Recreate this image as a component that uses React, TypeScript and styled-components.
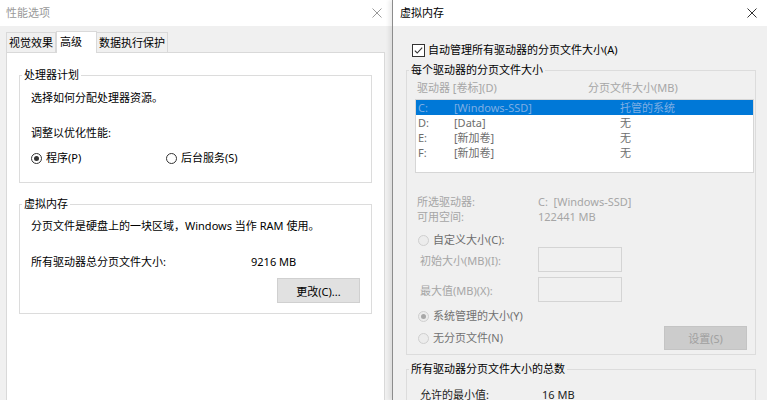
import React from "react";
import styled, { createGlobalStyle } from "styled-components";

const GlobalStyle = createGlobalStyle`
  html, body {
    margin: 0;
    padding: 0;
  }
  body {
    font-family: "Noto Sans", "Noto Sans CJK SC", sans-serif;
    font-size: 11px;
    color: #000;
    background: #f0f0f0;
  }
`;

const Screen = styled.div`
  display: flex;
  width: 767px;
  height: 400px;
  overflow: hidden;
  background: #f0f0f0;
`;

const Window = styled.div<{ $width?: number; $active?: boolean }>`
  display: flex;
  flex-direction: column;
  flex: ${(p) => (p.$width ? `0 0 ${p.$width}px` : "1 1 auto")};
  min-width: 0;
  background: #f0f0f0;
  border-left: ${(p) => (p.$active ? "1px solid #8c8c8c" : "none")};
  box-shadow: ${(p) => (p.$active ? "-3px 0 4px rgba(0,0,0,0.08)" : "none")};
`;

const TitleBar = styled.div<{ $active?: boolean }>`
  display: flex;
  align-items: center;
  justify-content: space-between;
  flex: 0 0 26px;
  padding: 0 10px 0 ${(p) => (p.$active ? 7 : 6)}px;
  background: #fff;
  color: ${(p) => (p.$active ? "#000" : "#999")};
  line-height: 14px;
`;

const CloseIcon = ({ color }: { color: string }) => (
  <svg width="10" height="10" viewBox="0 0 10 10">
    <path d="M0.5 0.5 L9.5 9.5 M9.5 0.5 L0.5 9.5" stroke={color} strokeWidth="1" />
  </svg>
);

/* ---------- left dialog ---------- */

const LeftBody = styled.div`
  display: flex;
  flex-direction: column;
  flex: 1;
  padding: 6px 7px 0 6px;
`;

const TabRow = styled.div`
  display: flex;
  align-items: flex-end;
  height: 20px;
`;

const Tab = styled.div<{ $selected?: boolean }>`
  position: relative;
  z-index: ${(p) => (p.$selected ? 1 : 0)};
  height: ${(p) => (p.$selected ? 21 : 19)}px;
  line-height: ${(p) => (p.$selected ? 19 : 19)}px;
  margin-bottom: ${(p) => (p.$selected ? -1 : 0)}px;
  padding: ${(p) => (p.$selected ? "0 14px 0 3px" : "0 2px")};
  border: 1px solid #d9d9d9;
  border-bottom: none;
  border-left: ${(p) => (p.$selected ? "1px solid #d9d9d9" : "none")};
  background: ${(p) => (p.$selected ? "#fff" : "#f0f0f0")};
  &:first-child {
    border-left: 1px solid #d9d9d9;
  }
`;

const TabPanel = styled.div`
  flex: 1;
  background: #fff;
  border: 1px solid #d9d9d9;
  border-bottom: none;
  padding: 0 12px;
`;

const Group = styled.fieldset<{ $mt: number; $pb: number; $pr?: number }>`
  margin: ${(p) => p.$mt}px 0 0;
  padding: 0 ${(p) => p.$pr ?? 0}px ${(p) => p.$pb}px 2px;
  border: 1px solid #dcdcdc;
  min-width: 0;
`;

const Legend = styled.legend`
  padding: 0 2px;
  line-height: 14px;
  color: #000;
`;

const GroupContent = styled.div<{ $pl: number }>`
  display: flex;
  flex-direction: column;
  padding-left: ${(p) => p.$pl}px;
`;

const Line = styled.div<{ $mt?: number; $color?: string; $lh?: number; $pl?: number }>`
  margin-top: ${(p) => p.$mt ?? 0}px;
  padding-left: ${(p) => p.$pl ?? 0}px;
  line-height: ${(p) => p.$lh ?? 14}px;
  color: ${(p) => p.$color ?? "#000"};
  white-space: nowrap;
`;

const ValueRow = styled.div<{ $mt?: number; $col: number; $color?: string; $lh?: number; $pl?: number }>`
  display: grid;
  grid-template-columns: ${(p) => p.$col}px auto;
  margin-top: ${(p) => p.$mt ?? 0}px;
  padding-left: ${(p) => p.$pl ?? 0}px;
  line-height: ${(p) => p.$lh ?? 14}px;
  color: ${(p) => p.$color ?? "#000"};
  white-space: nowrap;
`;

const RadioRow = styled.div<{ $mt?: number }>`
  display: grid;
  grid-template-columns: 135px auto;
  margin-top: ${(p) => p.$mt ?? 0}px;
`;

const RadioLabel = styled.label<{ $color?: string; $gap?: number; $pl?: number; $mt?: number }>`
  display: flex;
  align-items: center;
  gap: ${(p) => p.$gap ?? 4}px;
  margin-top: ${(p) => p.$mt ?? 0}px;
  padding-left: ${(p) => p.$pl ?? 0}px;
  line-height: 14px;
  color: ${(p) => p.$color ?? "#000"};
  white-space: nowrap;
`;

const RadioCircle = styled.span<{ $checked?: boolean; $disabled?: boolean }>`
  display: inline-flex;
  align-items: center;
  justify-content: center;
  box-sizing: border-box;
  width: 11px;
  height: 11px;
  border-radius: 50%;
  border: 1px solid ${(p) => (p.$disabled ? "#cfcfcf" : "#333")};
  background: ${(p) => (p.$disabled ? "#ececec" : "#fff")};
  &::after {
    content: "";
    display: ${(p) => (p.$checked ? "block" : "none")};
    width: 5px;
    height: 5px;
    border-radius: 50%;
    background: ${(p) => (p.$disabled ? "#a8a8a8" : "#333")};
  }
`;

const ButtonRow = styled.div<{ $mt?: number; $pr?: number }>`
  display: flex;
  justify-content: flex-end;
  margin-top: ${(p) => p.$mt ?? 0}px;
  padding-right: ${(p) => p.$pr ?? 0}px;
`;

const Button = styled.button<{ $disabled?: boolean; $h?: number }>`
  box-sizing: border-box;
  width: 83px;
  height: ${(p) => p.$h ?? 25}px;
  font: inherit;
  font-size: 11px;
  color: ${(p) => (p.$disabled ? "#a0a0a0" : "#000")};
  background: ${(p) => (p.$disabled ? "#cccccc" : "#e1e1e1")};
  border: 1px solid ${(p) => (p.$disabled ? "#c4c4c4" : "#d0d0d0")};
  padding: 0;
`;

/* ---------- right dialog ---------- */

const RightBody = styled.div`
  display: flex;
  flex-direction: column;
  flex: 1;
  padding: 17px 11px 0 13px;
`;

const CheckRow = styled.label`
  display: flex;
  align-items: center;
  gap: 3px;
  padding-left: 6px;
  line-height: 14px;
  white-space: nowrap;
`;

const ListBox = styled.div`
  margin-top: 4px;
  height: 74px;
  box-sizing: border-box;
  border: 1px solid #d6d6d6;
  background: #fff;
  padding-top: 0;
`;

const ListRow = styled.div<{ $selected?: boolean }>`
  display: grid;
  grid-template-columns: 36px 166px auto;
  height: 15px;
  line-height: 15px;
  padding-left: 2px;
  background: ${(p) => (p.$selected ? "#0078d7" : "transparent")};
  color: ${(p) => (p.$selected ? "#7eaee4" : "#6d6d6d")};
  white-space: nowrap;
`;

const InputRow = styled.div<{ $mt?: number }>`
  display: grid;
  grid-template-columns: 118px 84px;
  align-items: center;
  margin-top: ${(p) => p.$mt ?? 0}px;
  padding-left: 5px;
  color: #a6a6a6;
  white-space: nowrap;
`;

const FakeInput = styled.div`
  box-sizing: border-box;
  height: 25px;
  border: 1px solid #d4d4d4;
  background: #f0f0f0;
`;

const SplitRow = styled.div<{ $mt?: number }>`
  display: flex;
  align-items: center;
  justify-content: space-between;
  margin-top: ${(p) => p.$mt ?? 0}px;
  padding-right: 7px;
`;

const drives = [
  { d: "C:", label: "[Windows-SSD]", size: "托管的系统", selected: true },
  { d: "D:", label: "[Data]", size: "无" },
  { d: "E:", label: "[新加卷]", size: "无" },
  { d: "F:", label: "[新加卷]", size: "无" },
];

const GRAY = "#a6a6a6";
const MID = "#707070";

export default function App() {
  return (
    <>
      <GlobalStyle />
      <Screen>
        <Window $width={392}>
          <TitleBar>
            <span>性能选项</span>
            <CloseIcon color="#9a9a9a" />
          </TitleBar>
          <LeftBody>
            <TabRow>
              <Tab>视觉效果</Tab>
              <Tab $selected>高级</Tab>
              <Tab>数据执行保护</Tab>
            </TabRow>
            <TabPanel>
              <Group $mt={15} $pb={17}>
                <Legend>处理器计划</Legend>
                <GroupContent $pl={9}>
                  <Line $mt={9}>选择如何分配处理器资源。</Line>
                  <Line $mt={21}>调整以优化性能:</Line>
                  <RadioRow $mt={11}>
                    <RadioLabel>
                      <RadioCircle $checked />
                      程序(P)
                    </RadioLabel>
                    <RadioLabel>
                      <RadioCircle />
                      后台服务(S)
                    </RadioLabel>
                  </RadioRow>
                </GroupContent>
              </Group>
              <Group $mt={14} $pb={10}>
                <Legend>虚拟内存</Legend>
                <GroupContent $pl={9}>
                  <Line $mt={8}>分页文件是硬盘上的一块区域，Windows 当作 RAM 使用。</Line>
                  <ValueRow $mt={22} $col={220}>
                    <span>所有驱动器总分页文件大小:</span>
                    <span>9216 MB</span>
                  </ValueRow>
                  <ButtonRow $mt={9} $pr={11}>
                    <Button>更改(C)...</Button>
                  </ButtonRow>
                </GroupContent>
              </Group>
            </TabPanel>
          </LeftBody>
        </Window>

        <Window $active>
          <TitleBar $active>
            <span>虚拟内存</span>
            <CloseIcon color="#333" />
          </TitleBar>
          <RightBody>
            <CheckRow>
              <svg width="13" height="13" viewBox="0 0 13 13">
                <rect x="0.5" y="0.5" width="12" height="12" fill="#fff" stroke="#333" />
                <path d="M2.8 6.6 L5.2 9 L10.2 3.6" fill="none" stroke="#333" strokeWidth="1.1" />
              </svg>
              自动管理所有驱动器的分页文件大小(A)
            </CheckRow>

            <Group $mt={6} $pb={4} $pr={1}>
              <Legend>每个驱动器的分页文件大小</Legend>
              <GroupContent $pl={6}>
                <ValueRow $mt={4} $col={171} $pl={2} $color={GRAY}>
                  <span>驱动器 [卷标](D)</span>
                  <span>分页文件大小(MB)</span>
                </ValueRow>
                <ListBox>
                  {drives.map((r) => (
                    <ListRow key={r.d} $selected={r.selected}>
                      <span>{r.d}</span>
                      <span>{r.label}</span>
                      <span>{r.size}</span>
                    </ListRow>
                  ))}
                </ListBox>
                <ValueRow $mt={21} $col={121} $pl={2} $lh={15} $color={GRAY}>
                  <span>所选驱动器:</span>
                  <span>C:&nbsp;&nbsp;[Windows-SSD]</span>
                </ValueRow>
                <ValueRow $col={121} $pl={2} $lh={15} $color={GRAY}>
                  <span>可用空间:</span>
                  <span>122441 MB</span>
                </ValueRow>
                <RadioLabel $mt={9} $pl={3} $color="#6d6d6d">
                  <RadioCircle $disabled />
                  自定义大小(C):
                </RadioLabel>
                <InputRow>
                  <span>初始大小(MB)(I):</span>
                  <FakeInput />
                </InputRow>
                <InputRow $mt={5}>
                  <span>最大值(MB)(X):</span>
                  <FakeInput />
                </InputRow>
                <RadioLabel $mt={7} $pl={3} $color={MID}>
                  <RadioCircle $disabled $checked />
                  系统管理的大小(Y)
                </RadioLabel>
                <SplitRow $mt={3}>
                  <RadioLabel $pl={3} $color={MID}>
                    <RadioCircle $disabled />
                    无分页文件(N)
                  </RadioLabel>
                  <Button $disabled $h={24}>设置(S)</Button>
                </SplitRow>
              </GroupContent>
            </Group>

            <Group $mt={7} $pb={10}>
              <Legend>所有驱动器分页文件大小的总数</Legend>
              <GroupContent $pl={6}>
                <ValueRow $mt={12} $col={122} $pl={5} $color="#222">
                  <span>允许的最小值:</span>
                  <span>16 MB</span>
                </ValueRow>
              </GroupContent>
            </Group>
          </RightBody>
        </Window>
      </Screen>
    </>
  );
}
